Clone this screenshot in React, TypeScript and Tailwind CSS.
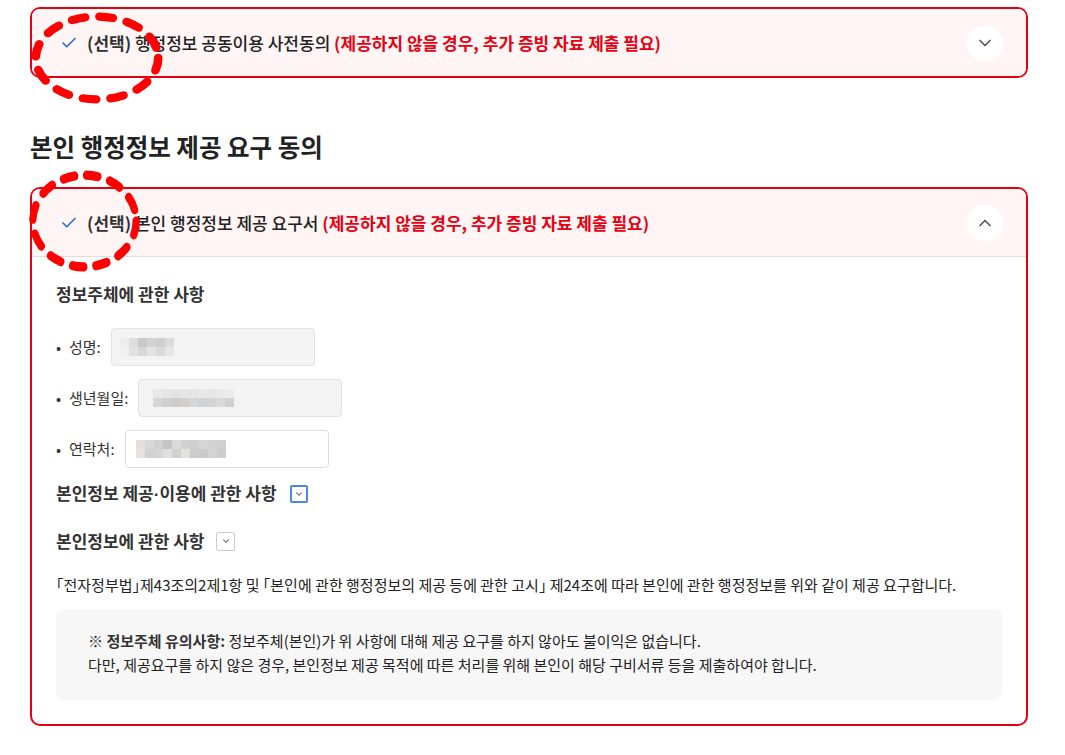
import { Check, ChevronDown, ChevronUp } from "lucide-react";

const FONT = { fontFamily: '"Noto Sans CJK KR", "Noto Sans", sans-serif' };

// pixelated blur blocks standing in for masked personal data
function Mosaic({ rows }: { rows: string[][] }) {
  return (
    <div className="flex flex-col">
      {rows.map((row, i) => (
        <div key={i} className="flex">
          {row.map((c, j) => (
            <div key={j} className="h-[9px] w-[9px]" style={{ backgroundColor: c }} />
          ))}
        </div>
      ))}
    </div>
  );
}

function ConsentHeader({ title, open }: { title: string; open: boolean }) {
  return (
    <div className="flex h-[67px] items-center justify-between bg-[#fff5f5] pl-[28px] pr-[23px]">
      <div className="flex items-center gap-[9px] text-[17px] text-[#222]">
        <Check size={18} strokeWidth={2.2} className="text-[#1f6fe0]" />
        <p>
          <span className="font-semibold text-[#333]">(선택)</span> <span className="font-medium">{title}</span>{" "}
          <span className="font-bold text-[#e60012]">(제공하지 않을 경우, 추가 증빙 자료 제출 필요)</span>
        </p>
      </div>
      <div className="flex h-[36px] w-[36px] items-center justify-center rounded-full bg-white">
        {open ? (
          <ChevronUp size={20} strokeWidth={2} className="text-[#555]" />
        ) : (
          <ChevronDown size={20} strokeWidth={2} className="text-[#555]" />
        )}
      </div>
    </div>
  );
}

function DashedMark({ className }: { className: string }) {
  return (
    <svg className={`pointer-events-none absolute ${className}`} viewBox="0 0 140 100" preserveAspectRatio="none">
      <ellipse cx="70" cy="50" rx="64" ry="45" fill="none" stroke="#f00" strokeWidth="9" strokeLinecap="round" strokeDasharray="14 15" />
    </svg>
  );
}

export default function App() {
  return (
    <div className="relative min-h-screen bg-white" style={FONT}>
      <div className="w-[1028px] pl-[30px] pt-[7px]">
        <section className="overflow-hidden rounded-[10px] border-2 border-[#e60012]">
          <ConsentHeader title="행정정보 공동이용 사전동의" open={false} />
        </section>

        <h2 className="mt-[53px] text-[24.5px] font-bold leading-8 text-[#222]">본인 행정정보 제공 요구 동의</h2>

        <section className="mt-[24px] overflow-hidden rounded-[10px] border-2 border-[#e60012]">
          <div className="border-b border-[#dddddd]">
            <ConsentHeader title="본인 행정정보 제공 요구서" open />
          </div>

          <div className="px-[24px] pb-[24px] pt-[25px] text-[#333]">
            <h3 className="text-[17px] font-semibold leading-6">정보주체에 관한 사항</h3>

            <ul className="mt-[22px] flex flex-col gap-[13px] text-[15px]">
              <li className="flex items-center">
                <span className="w-[13px]">•</span>
                <span>성명:</span>
                <div className="ml-[10px] flex h-[38px] w-[204px] items-center rounded-[4px] border border-[#e2e2e2] bg-[#f3f3f3] pl-[8px]">
                  <Mosaic
                    rows={[
                      ["#eeeeee", "#dddddd", "#c9c9c9", "#d2d2d2", "#cfcfcf", "#dcdcdc"],
                      ["#f0f0f0", "#e2e2e2", "#d8d8d8", "#e4e4e4", "#dadada", "#e6e6e6"],
                    ]}
                  />
                </div>
              </li>
              <li className="flex items-center">
                <span className="w-[13px]">•</span>
                <span>생년월일:</span>
                <div className="ml-[10px] flex h-[38px] w-[204px] items-center rounded-[4px] border border-[#e2e2e2] bg-[#f3f3f3] pl-[14px]">
                  <Mosaic
                    rows={[
                      ["#e9e9e9", "#e6e6e6", "#e3e3e3", "#e6e6e6", "#e5e5e5", "#e8e8e8", "#e6e6e6", "#e9e9e9", "#ececec"],
                      ["#d6d6d6", "#d0d0d0", "#cccccc", "#d2cfcc", "#d6d6d6", "#cfd2d6", "#d3d3d3", "#dadada", "#d0d0d0"],
                    ]}
                  />
                </div>
              </li>
              <li className="flex items-center">
                <span className="w-[13px]">•</span>
                <span>연락처:</span>
                <div className="ml-[10px] flex h-[38px] w-[204px] items-center rounded-[4px] border border-[#dddddd] bg-white pl-[10px]">
                  <Mosaic
                    rows={[
                      ["#e2dfdc", "#d8d8d8", "#d0d0d0", "#c4c4c4", "#dcdad8", "#d2d2d2", "#cfcfcf", "#d6d6d6", "#d3d3d3", "#d0d0d0"],
                      ["#e6e3e0", "#d2d2d2", "#d6d6d6", "#e0e0e2", "#d0d0d0", "#e4e2de", "#cccccc", "#c8cacc", "#d4d4d4", "#cccccc"],
                    ]}
                  />
                </div>
              </li>
            </ul>

            <div className="mt-[13px] flex items-center text-[17px] font-semibold leading-6">
              <span>
                본인정보 제공<span className="font-['Liberation_Sans']">·</span>이용에 관한 사항
              </span>
              <span className="ml-[13px] flex h-[18px] w-[18px] items-center justify-center rounded-[2px] border-2 border-[#4f86e8] bg-white">
                <ChevronDown size={10} strokeWidth={2.5} className="text-[#555]" />
              </span>
            </div>

            <div className="mt-[22px] flex items-center text-[17px] font-semibold leading-6">
              <span>본인정보에 관한 사항</span>
              <span className="ml-[12px] flex h-[19px] w-[19px] items-center justify-center rounded-[2px] border border-[#cccccc] bg-white">
                <ChevronDown size={10} strokeWidth={2.5} className="text-[#555]" />
              </span>
            </div>

            {/* halt: half-width CJK brackets, as the original font sets them */}
            <p className="mt-[22px] text-[15px] leading-5 text-[#222] [font-feature-settings:'halt']">
              「전자정부법」제43조의2제1항 및 「본인에 관한 행정정보의 제공 등에 관한 고시」 제24조에 따라 본인에 관한 행정정보를 위와 같이 제공 요구합니다.
            </p>

            <div className="mt-[14px] rounded-[8px] bg-[#f7f7f7] pb-[23px] pl-[32px] pr-[24px] pt-[20px] text-[15px] leading-6 text-[#222]">
              <p>
                <span className="font-bold text-[#333]">※ 정보주체 유의사항:</span> 정보주체(본인)가 위 사항에 대해 제공 요구를 하지 않아도 불이익은 없습니다.
              </p>
              <p>다만, 제공요구를 하지 않은 경우, 본인정보 제공 목적에 따른 처리를 위해 본인이 해당 구비서류 등을 제출하여야 합니다.</p>
            </div>
          </div>
        </section>
      </div>

      <DashedMark className="left-[30px] top-[12px] h-[92px] w-[134px]" />
      <DashedMark className="left-[28px] top-[170px] h-[102px] w-[113px]" />
    </div>
  );
}
